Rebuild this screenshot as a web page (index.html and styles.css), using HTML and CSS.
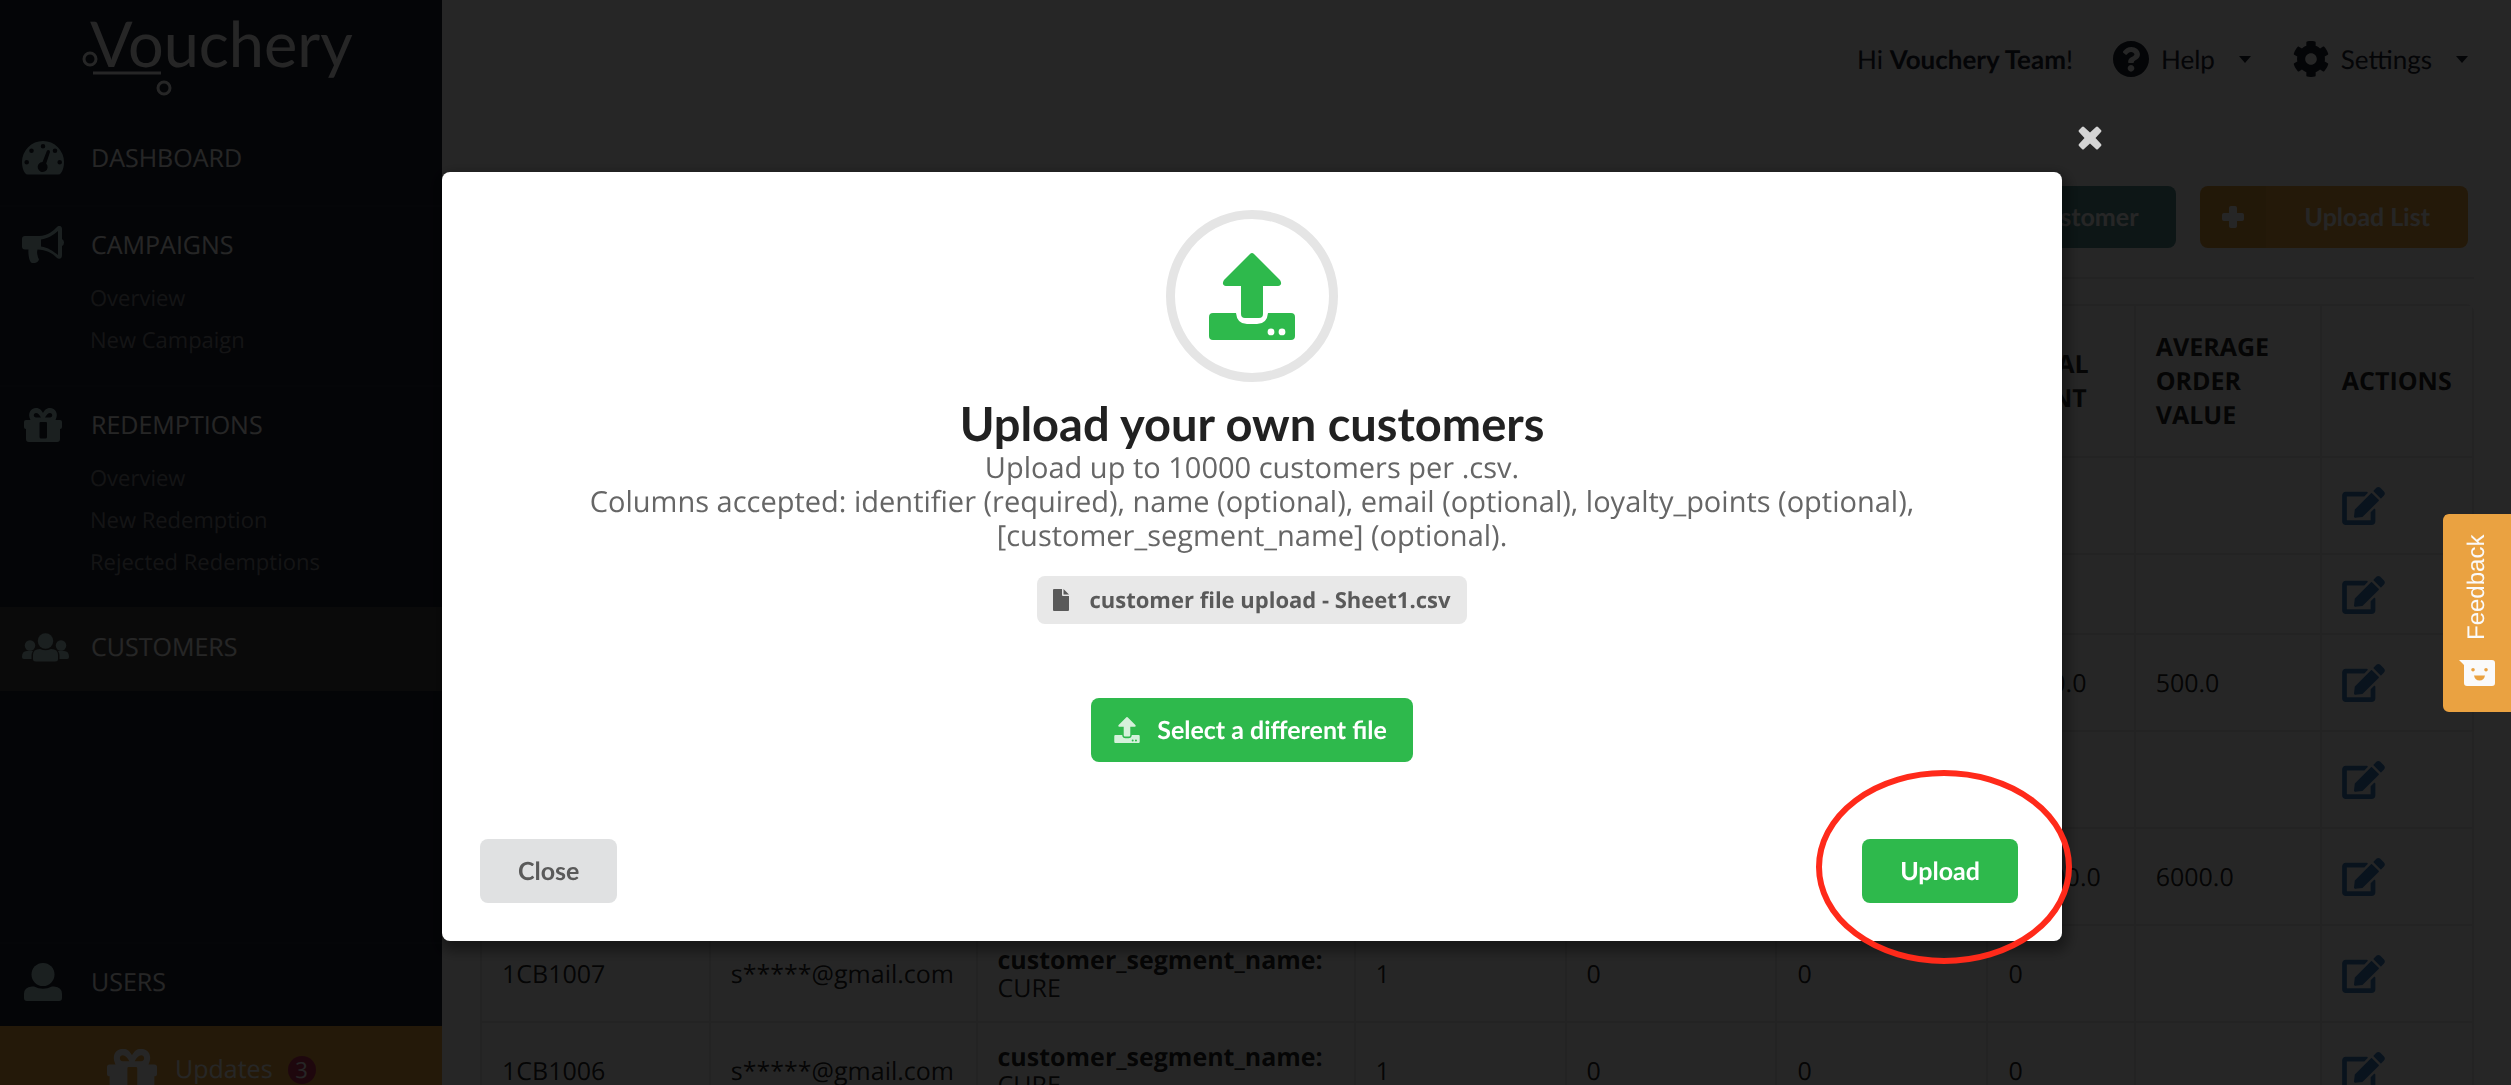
FILE: index.html
```html
<!DOCTYPE html>
<html lang="en">
<head>
  <meta charset="UTF-8">
  <title>Vouchery - Customers</title>
  <link rel="stylesheet" href="styles.css">
</head>
<body>
  <!-- shared icons -->
  <svg class="sprite" width="0" height="0">
    <symbol id="i-edit" viewBox="0 0 576 512"><path d="M402.6 83.2l90.2 90.2c3.8 3.8 3.8 10 0 13.8L274.4 405.6l-92.8 10.3c-12.4 1.4-22.9-9.1-21.5-21.5l10.3-92.8L388.8 83.2c3.8-3.8 10-3.8 13.8 0zm162-22.9l-48.8-48.8c-15.2-15.2-39.9-15.2-55.2 0l-35.4 35.4c-3.8 3.8-3.8 10 0 13.8l90.2 90.2c3.8 3.8 10 3.8 13.8 0l35.4-35.4c15.2-15.3 15.2-40 0-55.2zM384 346.2V448H64V128h229.8c3.2 0 6.2-1.3 8.5-3.5l40-40c7.6-7.6 2.2-20.5-8.5-20.5H48C21.5 64 0 85.5 0 112v352c0 26.5 21.5 48 48 48h352c26.5 0 48-21.5 48-48V306.2c0-10.7-12.9-16-20.5-8.5l-40 40c-2.2 2.3-3.5 5.3-3.5 8.5z"/></symbol>
    <symbol id="i-upload" viewBox="0 0 86 87"><path d="M41 1q2-2 4 0l26 26q3 5-2 6H54v28q0 4-4 4H36q-4 0-4-4V33H17q-5-1-2-6z"/><path fill-rule="evenodd" d="M4 60h23q1 11 11 11h10q10 0 11-11h23q4 0 4 4v19q0 4-4 4H4q-4 0-4-4V64q0-4 4-4zm58 15.500a3.400 3.400 0 1 0 0 6.800a3.400 3.400 0 1 0 0-6.800zm11 0a3.400 3.400 0 1 0 0 6.800a3.400 3.400 0 1 0 0-6.800z"/></symbol>
    <symbol id="i-gift" viewBox="0 0 38 34"><path fill-rule="evenodd" d="M2 12h4.500C3 5 7 0 12 0c4 0 5.500 2.500 7 5 1.500-2.500 3-5 7-5 5 0 9 5 5.500 12H36q2 0 2 2v5q0 2-2 2v10q0 3-3 3H5q-3 0-3-3V21q-2 0-2-2v-5q0-2 2-2zm10-7c-3 0-3 4.500 0 4.500h5C15.500 7 14 5 12 5zm14 0c-2 0-3.500 2-5 4.500h5c3 0 3-4.500 0-4.500zM16.500 14q-1 0-1 1v14q0 1.500 1.500 1.500h4.500q1.500 0 1.500-1.500V15q0-1-1-1z"/></symbol>
  </svg>

  <div class="app">
    <aside class="sidebar">
      <a class="logo" href="#">Vouchery
        <svg class="logo-mark" width="92" height="46" viewBox="0 0 92 46" fill="none" stroke="currentColor" stroke-width="3"><circle cx="8" cy="9" r="6"/><circle cx="82" cy="38" r="6"/><path d="M11 23h68"/></svg>
      </a>

      <nav class="menu">
        <div class="item">
          <a class="title" href="#"><svg width="42" height="34" viewBox="0 0 42 34"><path fill-rule="evenodd" d="M21 0a21 21 0 0 1 21 21q0 7-3 11-1 1.500-3 1.500H6q-2 0-3-1.500-3-4-3-11A21 21 0 0 1 21 0zm0 3a2.300 2.300 0 1 0 0 4.600 2.300 2.300 0 0 0 0-4.600zM9.500 7.500a2.300 2.300 0 1 0 0 4.600 2.300 2.300 0 0 0 0-4.600zm23.500 0a2.300 2.300 0 1 0 0 4.600 2.300 2.300 0 0 0 0-4.600zM4.700 19a2.300 2.300 0 1 0 0 4.600 2.300 2.300 0 0 0 0-4.600zm33 0a2.300 2.300 0 1 0 0 4.600 2.300 2.300 0 0 0 0-4.600zM25 9.500L20.500 21a5 5 0 1 0 3.700 1.500L28 11q0-2-1.500-2-1 0-1.500.500z"/></svg>Dashboard</a>
        </div>
        <div class="item">
          <a class="title" href="#"><svg width="42" height="38" viewBox="0 0 42 38"><path fill-rule="evenodd" d="M3 10h14C26 10 32 4 34.500 1.500 37-1.500 40 0 40 3v10q2 1 2 3.500T40 20v9c0 4-3 5-5.500 2.500C31 28 26 24 15.500 23.500c-1 4 0 5 .500 8 .5 1 1.500 2 .500 3-1.500 3-6 3-7.500 2-2-2-3-9-2.500-13H3q-3 0-3-3V13q0-3 3-3zm16 3.500v7c7 1 12 4.500 17 8.500V5c-5 4-10 7.500-17 8.500z"/></svg>Campaigns</a>
          <div class="sub">
            <a href="#">Overview</a>
            <a href="#">New Campaign</a>
          </div>
        </div>
        <div class="item">
          <a class="title" href="#"><svg width="42" height="34"><use href="#i-gift"/></svg>Redemptions</a>
          <div class="sub">
            <a href="#">Overview</a>
            <a href="#">New Redemption</a>
            <a href="#">Rejected Redemptions</a>
          </div>
        </div>
        <div class="item active">
          <a class="title" href="#"><svg width="47" height="29" viewBox="0 0 47 29"><circle cx="23.500" cy="8" r="7.700"/><circle cx="8" cy="12.500" r="5.200"/><circle cx="39" cy="12.500" r="5.200"/><path d="M11 26V22q0-6 7-6 5.500 2.500 11 0 7 0 7 6v4q0 2.500-3 2.500H14q-3 0-3-2.500zM0 24q0-6 5-6h6q-1.500 2-1.500 4v4H2q-2 0-2-2zM47 24q0-6-5-6h-6q1.500 2 1.500 4v4H45q2 0 2-2z"/></svg>Customers</a>
        </div>
        <div class="item users">
          <a class="title" href="#"><svg width="42" height="38" viewBox="0 0 42 38"><ellipse cx="21" cy="11.500" rx="11.500" ry="11.500"/><path d="M2 35v-4q0-7 8-7.500h2q9 4.500 18 0h2q8 .5 8 7.500v4q0 3-3 3H5q-3 0-3-3z"/></svg>Users</a>
        </div>
      </nav>
      <a class="updates" href="#"><svg width="50" height="46" viewBox="0 0 38 34"><use href="#i-gift"/></svg>Updates <span class="badge">3</span></a>
    </aside>

    <main class="main">
      <header class="topbar">
        <span>Hi <b>Vouchery Team</b>!</span>
        <a class="drop help" href="#"><svg width="36" height="36" viewBox="8 8 496 496"><path d="M504 256c0 136.997-111.043 248-248 248S8 392.997 8 256C8 119.083 119.043 8 256 8s248 111.083 248 248zM262.655 90c-54.497 0-89.255 22.957-116.549 63.758-3.536 5.286-2.353 12.415 2.715 16.258l34.699 26.310c5.205 3.947 12.621 3.008 16.665-2.122 17.864-22.658 30.113-35.797 57.303-35.797 20.429 0 45.698 13.148 45.698 32.958 0 14.976-12.363 22.667-32.534 33.976C247.128 238.528 216 254.941 216 296v4c0 6.627 5.373 12 12 12h56c6.627 0 12-5.373 12-12v-1.333c0-28.462 83.186-29.647 83.186-106.667 0-58.002-60.165-102-116.531-102zM256 338c-25.365 0-46 20.635-46 46 0 25.364 20.635 46 46 46s46-20.636 46-46c0-25.365-20.635-46-46-46z"/></svg>Help<i class="caret"></i></a>
        <a class="drop" href="#"><svg width="36" height="36" viewBox="8 8 496 496"><path d="M487.400 315.700l-42.600-24.600c4.300-23.200 4.300-47 0-70.200l42.600-24.600c4.900-2.800 7.100-8.600 5.500-14-11.100-35.600-30-67.800-54.700-94.600-3.800-4.100-10-5.100-14.800-2.300L380.800 110c-17.900-15.400-38.500-27.300-60.800-35.100V25.800c0-5.600-3.900-10.500-9.400-11.700-36.700-8.200-74.300-7.800-109.200 0-5.500 1.200-9.400 6.100-9.400 11.700V75c-22.200 7.900-42.800 19.800-60.800 35.100L88.700 85.500c-4.900-2.800-11-1.900-14.800 2.300-24.700 26.700-43.600 58.900-54.700 94.600-1.700 5.400.6 11.200 5.500 14L67.300 221c-4.300 23.200-4.300 47 0 70.200l-42.600 24.600c-4.900 2.800-7.100 8.600-5.500 14 11.100 35.600 30 67.800 54.700 94.600 3.800 4.100 10 5.100 14.800 2.300l42.600-24.600c17.900 15.400 38.500 27.300 60.800 35.100v49.200c0 5.600 3.900 10.500 9.400 11.700 36.700 8.200 74.300 7.800 109.200 0 5.500-1.200 9.400-6.100 9.400-11.700v-49.200c22.200-7.900 42.800-19.800 60.800-35.100l42.600 24.600c4.900 2.800 11 1.900 14.800-2.300 24.700-26.700 43.600-58.900 54.700-94.600 1.500-5.500-.7-11.300-5.600-14.100zM256 336c-44.100 0-80-35.900-80-80s35.900-80 80-80 80 35.900 80 80-35.900 80-80 80z"/></svg>Settings<i class="caret"></i></a>
      </header>

      <div class="content">
        <div class="actions">
          <button class="add teal" type="button"><span class="plus"><svg width="22" height="22"><path d="M9 0h4q2 0 2 2v5h5q2 0 2 2v4q0 2-2 2h-5v5q0 2-2 2H9q-2 0-2-2v-5H2q-2 0-2-2V9q0-2 2-2h5V2q0-2 2-2z"/></svg></span>Add Customer</button>
          <button class="add orange" type="button"><span class="plus"><svg width="22" height="22"><path d="M9 0h4q2 0 2 2v5h5q2 0 2 2v4q0 2-2 2h-5v5q0 2-2 2H9q-2 0-2-2v-5H2q-2 0-2-2V9q0-2 2-2h5V2q0-2 2-2z"/></svg></span>Upload List</button>
        </div>

        <table class="customers">
          <colgroup>
            <col class="c-id"><col class="c-email"><col class="c-meta"><col class="c-num"><col class="c-num"><col class="c-num"><col class="c-total"><col class="c-avg"><col>
          </colgroup>
          <thead>
            <tr><th>Identifier</th><th>Email</th><th>Metadata</th><th>Segments</th><th>Points</th><th>Orders</th><th>Total spent</th><th>Average order value</th><th>Actions</th></tr>
          </thead>
          <tbody>
            <tr><td></td><td></td><td></td><td></td><td></td><td></td><td></td><td></td><td><a href="#" aria-label="Edit"><svg width="43" height="38"><use href="#i-edit"/></svg></a></td></tr>
            <tr class="short"><td></td><td></td><td></td><td></td><td></td><td></td><td></td><td></td><td><a href="#" aria-label="Edit"><svg width="43" height="38"><use href="#i-edit"/></svg></a></td></tr>
            <tr><td></td><td></td><td></td><td></td><td></td><td></td><td>1500.0</td><td>500.0</td><td><a href="#" aria-label="Edit"><svg width="43" height="38"><use href="#i-edit"/></svg></a></td></tr>
            <tr><td></td><td></td><td></td><td></td><td></td><td></td><td></td><td></td><td><a href="#" aria-label="Edit"><svg width="43" height="38"><use href="#i-edit"/></svg></a></td></tr>
            <tr><td></td><td></td><td></td><td></td><td></td><td></td><td>12000.0</td><td>6000.0</td><td><a href="#" aria-label="Edit"><svg width="43" height="38"><use href="#i-edit"/></svg></a></td></tr>
            <tr><td>1CB1007</td><td>s*****@gmail.com</td><td><b>customer_segment_name:</b> CURE</td><td>1</td><td>0</td><td>0</td><td>0</td><td></td><td><a href="#" aria-label="Edit"><svg width="43" height="38"><use href="#i-edit"/></svg></a></td></tr>
            <tr><td>1CB1006</td><td>s*****@gmail.com</td><td><b>customer_segment_name:</b> CURE</td><td>1</td><td>0</td><td>0</td><td>0</td><td></td><td><a href="#" aria-label="Edit"><svg width="43" height="38"><use href="#i-edit"/></svg></a></td></tr>
          </tbody>
        </table>
      </div>
    </main>
  </div>

  <div class="dimmer">
    <div class="modal" role="dialog" aria-labelledby="modal-title">
      <button class="dismiss" type="button" aria-label="Dismiss"><svg width="24" height="24" viewBox="0 0 24 24"><path d="M4 1q1-1 2 0l6 5.500L18 1q1-1 2 0l3 3q1 1 0 2l-5.500 6 5.500 6q1 1 0 2l-3 3q-1 1-2 0l-6-5.500L6 23q-1 1-2 0l-3-3q-1-1 0-2l5.500-6L1 6q-1-1 0-2z"/></svg></button>

      <div class="round"><svg width="86" height="87"><use href="#i-upload"/></svg></div>
      <h2 id="modal-title">Upload your own customers</h2>
      <p>Upload up to 10000 customers per .csv.<br>Columns accepted: identifier (required), name (optional), email (optional), loyalty_points (optional),<br>[customer_segment_name] (optional).</p>
      <div class="file"><svg width="16" height="22" viewBox="0 0 16 22"><path d="M1 0h8v6q0 1 1 1h6v14q0 1-1 1H1q-1 0-1-1V1q0-1 1-1zM10.500 0L16 5.500h-5.500z"/></svg>customer file upload - Sheet1.csv</div>
      <button class="btn green select" type="button"><svg width="26" height="26" viewBox="0 0 86 87"><use href="#i-upload"/></svg>Select a different file</button>

      <div class="footer">
        <button class="btn" type="button">Close</button>
        <button class="btn green" type="button">Upload</button>
      </div>
      <svg class="ring" width="258" height="196"><ellipse cx="129" cy="98" rx="125" ry="94"/></svg>
    </div>
  </div>

  <button class="feedback" type="button"><svg width="36" height="26" viewBox="0 0 36 26"><path fill-rule="evenodd" d="M0 0h33q3 0 3 3v20q0 3-3 3H8q-3 0-3-3V5zM14 8a1.800 1.800 0 1 0 0 3.600 1.800 1.800 0 0 0 0-3.600zm13 0a1.800 1.800 0 1 0 0 3.600 1.800 1.800 0 0 0 0-3.600zM15 15.500q1 5 5.500 5t5.500-5z"/></svg>Feedback</button>
</body>
</html>
```
FILE: styles.css
```css
* { box-sizing: border-box; }
body { margin: 0; height: 100vh; overflow: hidden; font-family: "Open Sans", "Noto Sans", sans-serif; font-size: 25px; color: rgba(0, 0, 0, 0.87); background: #fff; text-rendering: geometricPrecision; }
a { color: inherit; text-decoration: none; }
button { border: 0; font-family: Lato, sans-serif; font-size: 25px; font-weight: bold; cursor: pointer; text-rendering: inherit; }
svg { fill: currentColor; flex: none; }
.sprite { position: absolute; }

.app { display: flex; height: 100vh; overflow: hidden; }

/* Sidebar */
.sidebar { flex: 0 0 442px; display: flex; flex-direction: column; background: #1b2130; color: #fff; }
.logo { position: relative; height: 118px; padding: 8px 0 0 90px; font-family: Lato, sans-serif; font-size: 63px; line-height: 72px; }
.logo-mark { position: absolute; left: 82px; top: 50px; fill: none; }
.menu { flex: 1; display: flex; flex-direction: column; }
.item { border-top: 2px solid #222838; padding: 10px 0 16px; }
.item:first-child { border-top-color: transparent; padding-bottom: 19px; }
.item.active { background: #484848; border-top-color: #484848; }
.item.users { margin-top: auto; }
.title { display: flex; align-items: center; height: 56px; padding-left: 22px; text-transform: uppercase; }
.title svg { width: 47px; margin-right: 22px; color: #b4d8d8; }
.title svg:not([width="47"]) { width: 42px; margin-right: 27px; }
.sub { display: flex; flex-direction: column; padding: 4px 0 8px 90px; font-size: 22px; line-height: 42px; color: #84878c; }
.updates { display: flex; flex: 0 0 59px; align-items: flex-start; padding: 22px 0 0 107px; line-height: 42px; overflow: hidden; background: #f0a73c; color: #fff; }
.updates svg { margin-right: 18px; }
.badge { width: 28px; height: 28px; margin: 8px 0 0 15px; border-radius: 50%; background: #c8325a; font-size: 22px; line-height: 28px; text-align: center; }

/* Page */
.main { flex: 1; min-width: 0; }
.topbar { display: flex; align-items: center; justify-content: flex-end; height: 118px; padding-right: 43px; background: #fafafa; color: #1b2130; font-family: Lato, sans-serif; font-size: 26px; }
.drop { display: flex; align-items: center; margin-left: 24px; }
.help { margin-left: 40px; margin-right: 18px; }
.drop svg { margin-right: 12px; }
.caret { margin-left: 24px; border: 6px solid transparent; border-top: 7px solid; border-bottom: 0; }
.content { padding: 68px 37px 0 38px; }
.actions { display: flex; justify-content: flex-end; gap: 24px; height: 93px; padding-right: 6px; border-bottom: 2px solid #e6e6e6; margin-bottom: 25px; }
.add { display: flex; align-items: center; height: 62px; padding: 0 38px 0 0; border-radius: 8px; color: #fff; overflow: hidden; }
.plus { display: flex; align-items: center; justify-content: center; width: 66px; height: 62px; margin-right: 38px; background: rgba(0, 0, 0, 0.05); }
.teal { background: #579393; }
.orange { background: #f0a73c; }

.customers { width: 100%; table-layout: fixed; border-collapse: separate; border-spacing: 0; border: 2px solid #e8e8e8; border-radius: 8px; }
.customers th, .customers td { border-left: 2px solid #e8e8e8; padding: 20px 18px 19px 20px; text-align: left; line-height: 28px; }
.customers th:first-child, .customers td:first-child { border-left: 0; }
.customers td { height: 97px; border-top: 2px solid #e8e8e8; }
.customers th { height: 150px; padding: 24px 12px 24px 20px; line-height: 34px; text-transform: uppercase; background: #fbfbfb; }
.customers .short td { height: 80px; }
.customers td svg { display: block; color: #4183c4; }
.c-id { width: 11.400%; }
.c-email { width: 13.400%; }
.c-meta { width: 19%; }
.c-num { width: 10.600%; }
.c-total { width: 7.400%; }
.c-avg { width: 9.350%; }

/* Upload modal */
.dimmer { position: fixed; inset: 0; display: flex; align-items: flex-start; justify-content: center; padding: 172px 7px 0 0; background: rgba(0, 0, 0, 0.85); }
.modal { position: relative; display: flex; flex-direction: column; align-items: center; width: 1620px; padding: 38px 44px 38px 38px; border-radius: 8px; background: #fff; box-shadow: 2px 6px 14px 4px rgba(0, 0, 0, 0.4); text-align: center; }
.round { display: flex; align-items: center; justify-content: center; width: 172px; height: 172px; border: 9px solid #e5e5e5; border-radius: 50%; color: #2eb94c; margin-left: 6px; }
.modal h2 { margin: 16px -6px 0 0; font-family: Lato, sans-serif; font-size: 47px; line-height: 52px; color: #212121; }
.modal p { margin: 1px -6px 0 0; font-size: 29px; line-height: 34px; color: #666; }
.file { display: flex; align-items: center; height: 48px; margin: 23px -6px 0 0; padding: 0 16px; border-radius: 8px; background: #e8e8e8; color: #5a5a5a; font-size: 22px; font-weight: bold; line-height: 24px; }
.file svg { margin-right: 20px; }
.btn { display: flex; align-items: center; height: 64px; padding: 0 38px; border-radius: 8px; background: #e0e1e2; color: #5a5a5a; }
.btn.green { background: #2eb94c; color: #fff; }
.btn.select { margin: 74px -6px 0 0; padding: 0 26px 0 23px; }
.select svg { margin-right: 17px; opacity: 0.8; }
.footer { display: flex; justify-content: space-between; align-self: stretch; margin-top: 77px; }
.dismiss { position: absolute; right: -40px; top: -46px; padding: 0; height: 24px; background: none; color: #d4d4d4; }
.dismiss svg { display: block; }
.ring { position: absolute; right: -11px; bottom: -24px; fill: none; stroke: #ff2a1a; stroke-width: 6px; pointer-events: none; }

/* Feedback tab */
.feedback { position: fixed; right: 0; top: 514px; display: flex; align-items: center; width: 68px; height: 198px; padding: 26px 0 0; gap: 20px; writing-mode: vertical-rl; transform: rotate(180deg); border-radius: 0 6px 6px 0; background: #eaa241; color: #fafafa; font-family: "Liberation Sans", Arial, sans-serif; font-size: 24px; font-weight: normal; }
.feedback svg { transform: rotate(180deg); }
```
